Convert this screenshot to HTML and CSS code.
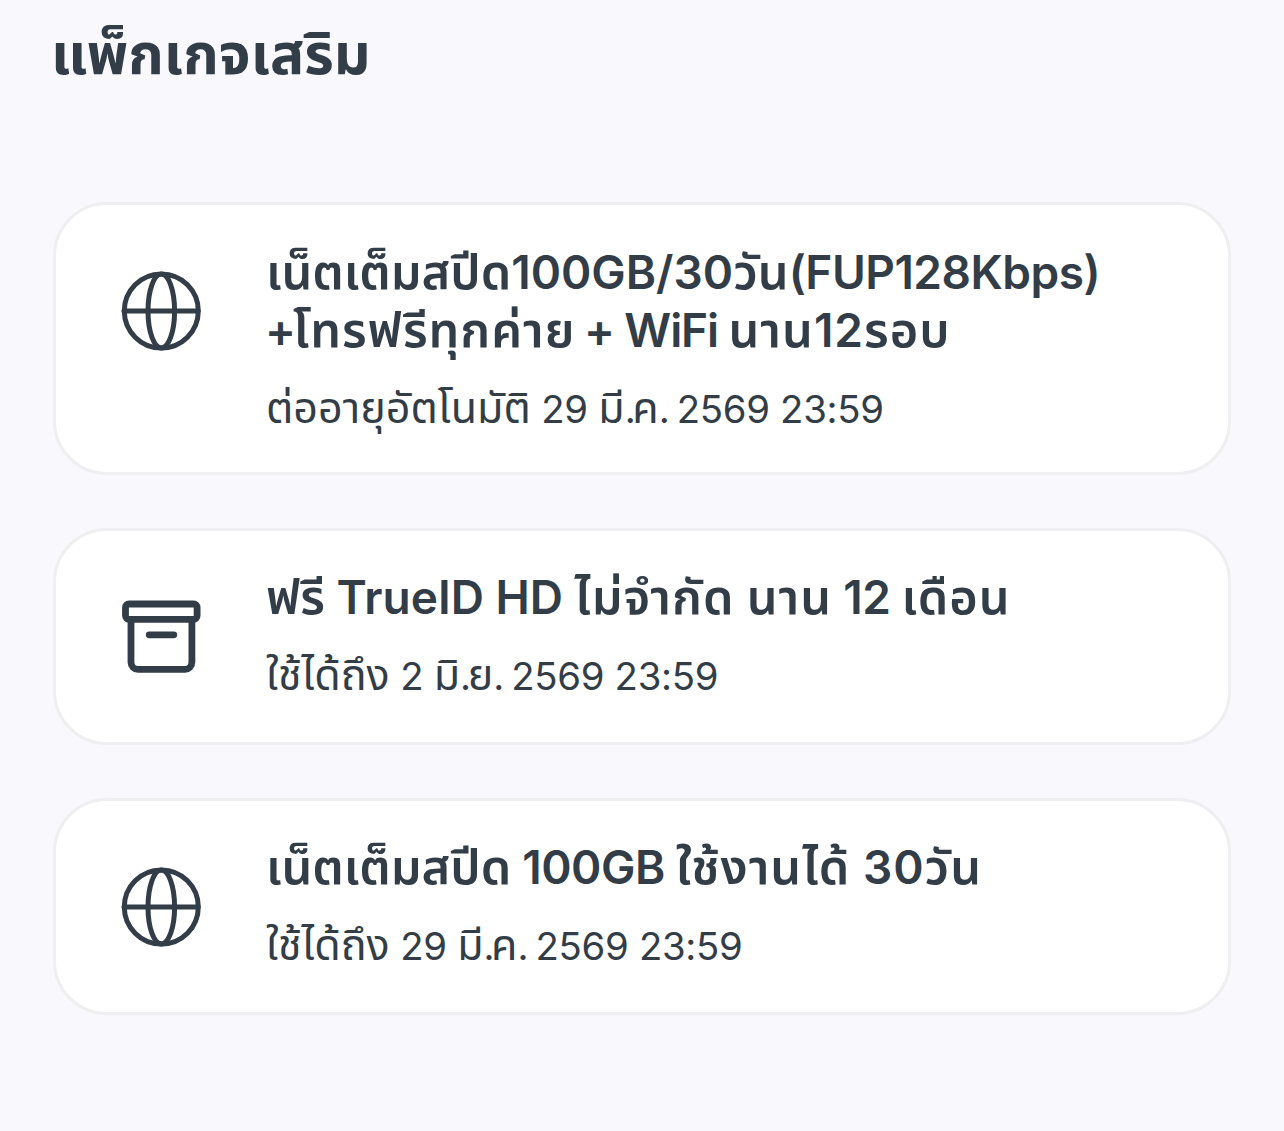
FILE: index.html
```html
<!DOCTYPE html>
<html lang="th">
<head>
  <meta charset="UTF-8">
  <title>แพ็กเกจเสริม</title>
  <link rel="stylesheet" href="styles.css">
</head>
<body>

<h1>แพ็กเกจเสริม</h1>

<div class="packages">
  <div class="card tall">
    <svg class="icon" viewBox="0 0 80 80">
      <circle cx="40.3" cy="40" r="37"/>
      <ellipse cx="40.3" cy="40" rx="13.3" ry="37"/>
      <path d="M3 40h74"/>
    </svg>
    <div class="info">
      <h2>เน็ตเต็มสปีด<span class="en">100GB/30</span>วัน<span class="en tight">(FUP128Kbps)</span><br><span class="en plus">+</span><span class="wide">โทรฟรีทุกค่าย</span><span class="en wifi"> + WiFi </span><span class="wide">นาน<span class="en">12</span>รอบ</span></h2>
      <p>ต่ออายุอัตโนมัติ<span class="en"> 29 </span>มี<span class="en dot">.</span>ค<span class="en dot">.</span><span class="en"> 2569 23:59</span></p>
    </div>
  </div>

  <div class="card">
    <svg class="icon box" viewBox="0 0 80 80">
      <rect x="4.5" y="7" width="71.6" height="15.3" rx="3.5"/>
      <path d="M10 22.5v42.8a7 7 0 0 0 7 7h46.9a7 7 0 0 0 7-7V22.5M28.2 37.8h24.6"/>
    </svg>
    <div class="info">
      <h2>ฟรี<span class="en"> TrueID HD </span><span class="wide">ไม่จำกัด</span> <span class="wide">นาน</span><span class="en tight"> 12 </span><span class="wide">เดือน</span></h2>
      <p>ใช้ได้ถึง<span class="en"> 2 </span>มิ<span class="en dot">.</span>ย<span class="en dot">.</span><span class="en"> 2569 23:59</span></p>
    </div>
  </div>

  <div class="card">
    <svg class="icon" viewBox="0 0 80 80">
      <circle cx="40.3" cy="40" r="37"/>
      <ellipse cx="40.3" cy="40" rx="13.3" ry="37"/>
      <path d="M3 40h74"/>
    </svg>
    <div class="info">
      <h2>เน็ตเต็มสปีด<span class="en tight"> 100GB </span><span class="wide">ใช้งานได้<span class="en"> 30</span>วัน</span></h2>
      <p>ใช้ได้ถึง<span class="en"> 29 </span>มี<span class="en dot">.</span>ค<span class="en dot">.</span><span class="en"> 2569 23:59</span></p>
    </div>
  </div>
</div>

</body>
</html>
```
FILE: styles.css
```css
* {
  box-sizing: border-box;
}
body {
  margin: 0;
  padding: 19px 53px 0;
  background-color: #f8f8fd;
  color: #333d47;
  font-family: Inter, "Noto Sans Thai", "Noto Sans", sans-serif;
}
h1 {
  margin: 0 0 113px -2px;
  height: 70px;
  font-size: 57px;
  line-height: 70px;
  font-weight: 700;
  white-space: nowrap;
}
.packages {
  display: flex;
  flex-direction: column;
  gap: 53px;
}
.card {
  display: flex;
  align-items: flex-start;
  gap: 65px;
  height: 217px;
  padding: 38px 64px 0 65px;
  background: white;
  border: 3px solid #efeff2;
  border-radius: 54px;
}
.card.tall {
  height: 273px;
}
.icon {
  flex: none;
  width: 80px;
  height: 80px;
  margin-top: 28px;
  fill: none;
  stroke: #333d47;
  stroke-width: 5;
  stroke-linecap: round;
  stroke-linejoin: round;
}
.icon.box {
  stroke-width: 6.8;
}
.info {
  margin-top: -1px;
}
.tall .info {
  margin-top: 0;
}
h2 {
  margin: 0;
  font-size: 48.7px;
  line-height: 58px;
  font-weight: 600;
  white-space: nowrap;
}
p {
  margin: 23px 0 0;
  font-size: 43px;
  line-height: 50px;
  white-space: nowrap;
}
.en {
  line-height: 1;
}
h2 .en {
  font-size: 46px;
}
p .en {
  font-size: 38.3px;
  letter-spacing: -0.3px;
}
h2 .tight {
  letter-spacing: -0.5px;
}
h2 .wifi {
  margin-left: -2px;
  letter-spacing: -1.1px;
}
h2 .plus {
  margin-left: -1px;
  letter-spacing: -3px;
}
.wide {
  letter-spacing: 1px;
}
p .dot {
  letter-spacing: -3.5px;
}
```
